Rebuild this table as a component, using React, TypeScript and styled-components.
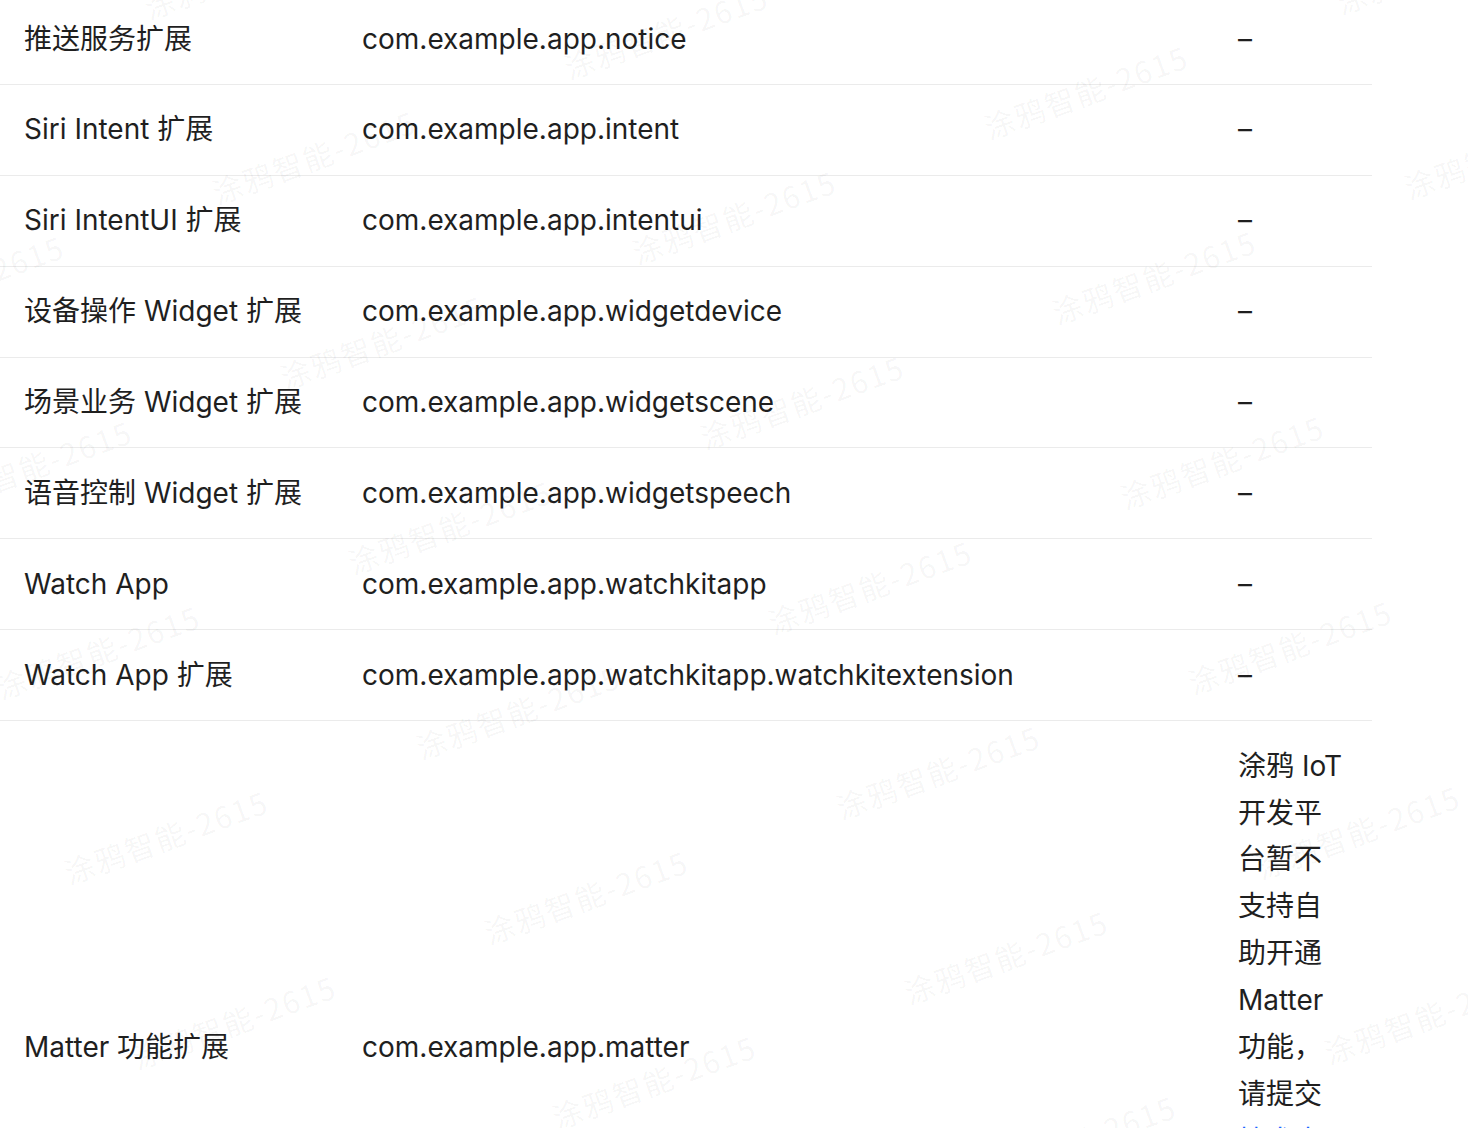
import * as React from "react";
import styled, { createGlobalStyle } from "styled-components";

// Bundle ID table for app extensions, with the tiled watermark on top

const GlobalStyle = createGlobalStyle`
  html, body {
    margin: 0;
    padding: 0;
    background: #ffffff;
  }
  body {
    font-family: Inter, "Noto Sans CJK SC", sans-serif;
    color: #1f1f1f;
  }
`;

const rows = [
  { name: "推送服务扩展", bundle: "com.example.app.notice" },
  { name: "Siri Intent 扩展", bundle: "com.example.app.intent" },
  { name: "Siri IntentUI 扩展", bundle: "com.example.app.intentui" },
  { name: "设备操作 Widget 扩展", bundle: "com.example.app.widgetdevice" },
  { name: "场景业务 Widget 扩展", bundle: "com.example.app.widgetscene" },
  { name: "语音控制 Widget 扩展", bundle: "com.example.app.widgetspeech" },
  { name: "Watch App", bundle: "com.example.app.watchkitapp" },
  { name: "Watch App 扩展", bundle: "com.example.app.watchkitapp.watchkitextension" },
];

const Page = styled.div`
  position: relative;
  height: 1128px;
  overflow: hidden;
`;

const Table = styled.table`
  width: 1372px;
  margin-top: -6px;
  border-collapse: collapse;
  table-layout: fixed;
`;

const Col = styled.col<{ $w: number }>`
  width: ${(p) => p.$w}px;
`;

const Row = styled.tr`
  border-bottom: 1px solid #ebebeb;
`;

const Cell = styled.td`
  padding: 21.5px 24px;
  font-size: 28px;
  line-height: 1.675;
  vertical-align: middle;
  text-align: left;
  word-break: break-word;
  color: #1f1f1f;
`;

const Dash = styled.span`
  color: #1f1f1f;
`;

const DocLink = styled.a`
  color: #1a66ff;
  text-decoration: none;
`;

const Watermarks = styled.div`
  position: absolute;
  inset: 0;
  pointer-events: none;
  overflow: hidden;
  z-index: 2;
`;

const Mark = styled.span`
  position: absolute;
  font-family: "Noto Sans CJK SC", sans-serif;
  font-size: 30px;
  line-height: 30px;
  letter-spacing: 2px;
  white-space: nowrap;
  color: rgba(0, 0, 0, 0.045);
  transform-origin: 0 100%;
  transform: rotate(-20deg);
`;

// lattice of watermark anchors (bottom-left of the text)
const marks: { x: number; y: number }[] = [];
for (let i = -4; i <= 3; i++) {
  for (let j = -2; j <= 7; j++) {
    const x = 570 + i * 420 + j * 68;
    const y = 82 + i * 60 + j * 185;
    if (x > -260 && x < 1468 && y > -40 && y < 1220) marks.push({ x, y });
  }
}

const App = () => {
  return (
    <Page>
      <GlobalStyle />
      <Table>
        <colgroup>
          <Col $w={338} />
          <Col $w={876} />
          <Col $w={158} />
        </colgroup>
        <tbody>
          {rows.map((r) => (
            <Row key={r.bundle}>
              <Cell>{r.name}</Cell>
              <Cell>{r.bundle}</Cell>
              <Cell>
                <Dash>–</Dash>
              </Cell>
            </Row>
          ))}
          <Row>
            <Cell>Matter 功能扩展</Cell>
            <Cell>com.example.app.matter</Cell>
            <Cell>
              涂鸦 IoT 开发平台暂不支持自助开通 Matter 功能，请提交
              <DocLink href="#">技术支持工单</DocLink>
              申请开通该功能。
            </Cell>
          </Row>
        </tbody>
      </Table>
      <Watermarks>
        {marks.map((m) => (
          <Mark key={`${m.x}-${m.y}`} style={{ left: m.x, top: m.y - 30 }}>
            涂鸦智能-2615
          </Mark>
        ))}
      </Watermarks>
    </Page>
  );
};

export default App;
